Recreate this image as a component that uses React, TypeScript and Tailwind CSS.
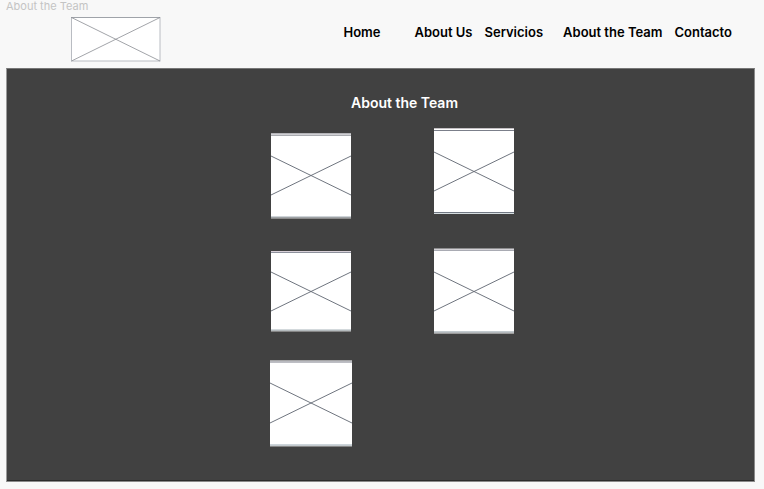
type Member = {
  id: string;
  width: number;
  height: number;
  space: string;
  cross: [number, number];
  top: string[];
  bottom: string[];
};

// Edge colours are listed one per pixel row, from top to bottom.
const leftMembers: Member[] = [
  { id: "m1", width: 80, height: 86, space: "mb-8", cross: [23, 62], top: ["#b4b4b8", "#d0d0d4", "#a9abb0"], bottom: ["#cfd4d8", "#9ea2a5", "#8a8a8a"] },
  { id: "m2", width: 80, height: 81, space: "mb-7", cross: [21, 60], top: ["#d8d0d8", "#8d919c"], bottom: ["#d3d9dc", "#b4babd", "#858585"] },
  { id: "m3", width: 82, height: 87, space: "", cross: [23, 63], top: ["#a4a4a6", "#b9babf", "#bdbec4"], bottom: ["#cdd5da", "#c3cace", "#858585"] },
];

const rightMembers: Member[] = [
  { id: "m4", width: 80, height: 86, space: "mb-[34px]", cross: [24, 63], top: ["#c4c0c4", "#ffffff", "#7b7f8a"], bottom: ["#727984", "#d5dde0"] },
  { id: "m5", width: 80, height: 86, space: "", cross: [24, 63], top: ["#8d8d8f", "#d2d0d5", "#a9abb3"], bottom: ["#c3cace", "#b4b9bd", "#9b9b9b"] },
];

const navLinks = [
  { label: "Home", gap: "mr-[34px]" },
  { label: "About Us", gap: "mr-3" },
  { label: "Servicios", gap: "mr-5" },
  { label: "About the Team", gap: "mr-3" },
  { label: "Contacto", gap: "" },
];

function MemberPhoto({ member }: { member: Member }) {
  const { width: w, height: h, cross, top, bottom, space } = member;
  return (
    <svg width={w} height={h} viewBox={`0 0 ${w} ${h}`} role="img" aria-label="Team member" className={`block shrink-0 ${space}`}>
      <rect width={w} height={h} fill="#ffffff" />
      {top.map((c, i) => (
        <rect key={`t${i}`} y={i} width={w} height={1} fill={c} />
      ))}
      {bottom.map((c, i) => (
        <rect key={`b${i}`} y={h - bottom.length + i} width={w} height={1} fill={c} />
      ))}
      <path d={`M0 ${cross[0]}L${w} ${cross[1]}M0 ${cross[1]}L${w} ${cross[0]}`} stroke="#5f6570" strokeWidth={0.9} fill="none" />
    </svg>
  );
}

export default function App() {
  return (
    <div className="min-h-screen bg-[#f8f8f8] pb-2 font-['Inter',sans-serif]">
      <header className="flex h-[68px] flex-col pl-1.5">
        <p className="h-[17px] text-[11px] leading-3 text-[#c4c4c4]">About the Team</p>
        <div className="flex items-start justify-between pr-8 pl-[65px]">
          <svg width="90" height="45" viewBox="0 0 90 45" role="img" aria-label="Logo" className="block shrink-0">
            <rect x="0.5" y="0.5" width="88.5" height="43.5" fill="#ffffff" stroke="#b9bcc2" />
            <path d="M0 0.5H89" stroke="#9fa3a9" />
            <path d="M0.5 0.5L89 44M0.5 44L89 0.5" stroke="#8a8d93" strokeWidth="0.8" />
          </svg>
          <nav className="flex pt-[5px] text-[13px] leading-5 font-semibold whitespace-nowrap text-black">
            {navLinks.map((link) => (
              <a key={link.label} href="#" className={link.gap}>
                {link.label}
              </a>
            ))}
          </nav>
        </div>
      </header>
      <main className="mr-[9px] ml-1.5 border border-t-[#777777] border-r-[#8a8a8a] border-b-[#8a8a8a] border-l-[#9a9a9a] bg-[#414141] pb-[34px] shadow-[inset_0_-1px_0_#2c2c2c]">
        <h1 className="pt-6 pl-12 text-center text-sm leading-5 font-semibold text-white">About the Team</h1>
        <div className="flex items-start justify-center gap-[83px] pt-[15px] pl-6">
          <div className="flex w-20 flex-col items-center pt-[5px]">
            {leftMembers.map((m) => (
              <MemberPhoto key={m.id} member={m} />
            ))}
          </div>
          <div className="flex w-20 flex-col items-center">
            {rightMembers.map((m) => (
              <MemberPhoto key={m.id} member={m} />
            ))}
          </div>
        </div>
      </main>
    </div>
  );
}
